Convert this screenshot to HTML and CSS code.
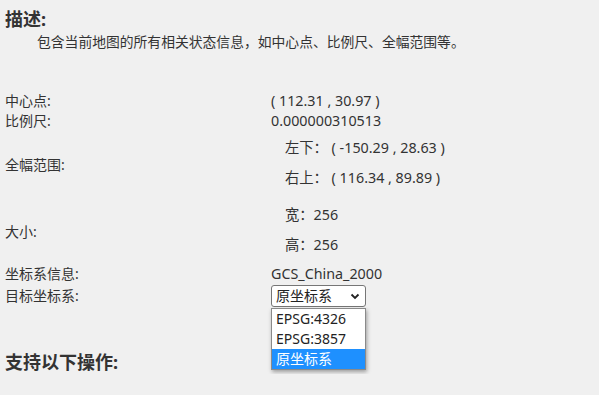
FILE: index.html
```html
<!DOCTYPE html>
<html lang="zh-CN">
<head>
    <meta charset="UTF-8">
    <title>地图状态</title>
    <link rel="stylesheet" href="styles.css">
</head>
<body>
<h2 class="section-title">描述:</h2>
<p class="section-desc">包含当前地图的所有相关状态信息，如中心点、比例尺、全幅范围等。</p>

<div class="info-table">
    <div class="info-label">中心点:</div>
    <div class="info-value">( 112.31 , 30.97 )</div>

    <div class="info-label">比例尺:</div>
    <div class="info-value">0.000000310513</div>

    <div class="info-label">全幅范围:</div>
    <div class="info-value sub-list extent">
        <div class="sub-row">左下： ( -150.29 , 28.63 )</div>
        <div class="sub-row">右上： ( 116.34 , 89.89 )</div>
    </div>

    <div class="info-label">大小:</div>
    <div class="info-value sub-list size">
        <div class="sub-row">宽：256</div>
        <div class="sub-row">高：256</div>
    </div>

    <div class="info-label">坐标系信息:</div>
    <div class="info-value">GCS_China_2000</div>

    <div class="info-label">目标坐标系:</div>
    <div class="info-value">
        <div class="crs-select">
            <div class="crs-current">
                <span>原坐标系</span>
                <svg class="crs-arrow" width="10" height="7" viewBox="0 0 10 7">
                    <path d="M1.5 1.5 L5 5 L8.5 1.5" fill="none" stroke="#222" stroke-width="1.8"/>
                </svg>
            </div>
            <!-- opened option list -->
            <ul class="crs-options">
                <li>EPSG:4326</li>
                <li>EPSG:3857</li>
                <li class="selected">原坐标系</li>
            </ul>
        </div>
    </div>
</div>

<h2 class="section-title ops-title">支持以下操作:</h2>
</body>
</html>
```

FILE: styles.css
```css
body {
    margin: 0;
    padding: 7px 5px 0 5px;
    background-color: #f0f0f0;
    color: #333333;
    font-family: "Noto Sans", "Noto Sans CJK SC", sans-serif;
    font-size: 14px;
}
.section-title {
    font-size: 18px;
    font-weight: bold;
    line-height: 24px;
    margin: 0;
}
.section-desc {
    margin: 1px 0 0 0;
    padding-left: 32px;
    line-height: 20px;
    font-size: 13.8px;
}
.info-table {
    display: grid;
    grid-template-columns: 266px auto;
    align-items: center;
    margin-top: 39px;
    justify-content: start;
}
.info-label,
.info-value {
    line-height: 20px;
}
.info-value {
    font-size: 14.3px;
}
.sub-list {
    padding-left: 14px;
}
.sub-row {
    line-height: 30px;
}
.extent {
    padding-top: 2px;
    padding-bottom: 6px;
}
.size {
    padding-top: 1px;
    padding-bottom: 4px;
}
.crs-select {
    position: relative;
    width: 95px;
    margin-top: 1px;
    font-size: 14px;
}
.crs-current {
    box-sizing: border-box;
    height: 22px;
    border: 1px solid #767676;
    border-radius: 3px;
    background-color: #ffffff;
    display: flex;
    align-items: center;
    justify-content: space-between;
    padding: 0 5px 0 4px;
    line-height: 20px;
    color: #222222;
}
.crs-arrow {
    display: block;
}
.crs-options {
    position: absolute;
    top: 23px;
    left: 0;
    width: 95px;
    box-sizing: border-box;
    margin: 0;
    padding: 0;
    list-style: none;
    background-color: #ffffff;
    border: 1px solid #8a8a8a;
    box-shadow: 1px 2px 4px rgba(0, 0, 0, 0.35);
    z-index: 2;
}
.crs-options li {
    line-height: 20px;
    padding-left: 4px;
    color: #222222;
}
.crs-options li.selected {
    background-color: #1e90ff;
    color: #ffffff;
}
.ops-title {
    margin-top: 43px;
}
```
